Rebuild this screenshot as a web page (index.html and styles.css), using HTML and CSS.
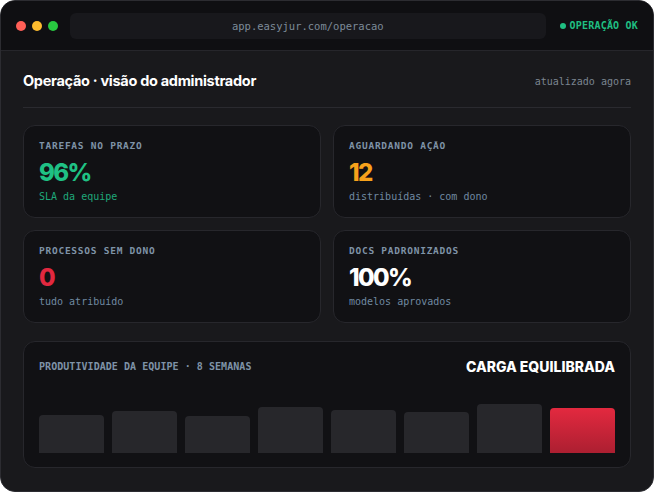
FILE: index.html
```html
<!DOCTYPE html>
<html lang="pt-BR">

<head>
  <meta charset="UTF-8">
  <meta name="viewport" content="width=device-width, initial-scale=1.0">
  <title>Operação · EasyJur</title>
  <link rel="stylesheet" href="styles.css">
</head>

<body>
  <div class="window">
    <div class="titlebar">
      <div class="dots">
        <span class="dot red"></span>
        <span class="dot yellow"></span>
        <span class="dot green"></span>
      </div>
      <div class="url">app.easyjur.com/operacao</div>
      <div class="status"><span class="status-dot"></span>OPERAÇÃO OK</div>
    </div>

    <div class="content">
      <div class="header">
        <h1>Operação · visão do administrador</h1>
        <span class="updated">atualizado agora</span>
      </div>

      <div class="cards">
        <div class="card">
          <div class="label">TAREFAS NO PRAZO</div>
          <div class="value green">96%</div>
          <div class="sub green-sub">SLA da equipe</div>
        </div>
        <div class="card">
          <div class="label">AGUARDANDO AÇÃO</div>
          <div class="value orange">12</div>
          <div class="sub">distribuídas · com dono</div>
        </div>
        <div class="card">
          <div class="label">PROCESSOS SEM DONO</div>
          <div class="value red">0</div>
          <div class="sub">tudo atribuído</div>
        </div>
        <div class="card">
          <div class="label">DOCS PADRONIZADOS</div>
          <div class="value white">100%</div>
          <div class="sub">modelos aprovados</div>
        </div>
      </div>

      <div class="chart">
        <div class="chart-head">
          <span class="chart-label">PRODUTIVIDADE DA EQUIPE · 8 SEMANAS</span>
          <span class="chart-tag">CARGA EQUILIBRADA</span>
        </div>
        <div class="bars">
          <div class="bar" style="height: 38px;"></div>
          <div class="bar" style="height: 42px;"></div>
          <div class="bar" style="height: 37px;"></div>
          <div class="bar" style="height: 46px;"></div>
          <div class="bar" style="height: 43px;"></div>
          <div class="bar" style="height: 41px;"></div>
          <div class="bar" style="height: 49px;"></div>
          <div class="bar current" style="height: 45px;"></div>
        </div>
      </div>
    </div>
  </div>
</body>

</html>
```

FILE: styles.css
```css
* {
  box-sizing: border-box;
}

body {
  margin: 0;
  background-color: #fff;
  font-family: "DejaVu Sans Mono", monospace;
}

.window {
  width: 654px;
  height: 492px;
  background-color: #19191c;
  border: 1px solid #2c2c31;
  border-radius: 15px;
  overflow: hidden;
}

/* title bar */
.titlebar {
  display: flex;
  align-items: center;
  height: 50px;
  padding: 0 15px;
  background-color: #0f0f12;
  border-bottom: 1px solid #26262b;
}

.dots {
  display: flex;
  gap: 6px;
}

.dot {
  width: 10px;
  height: 10px;
  border-radius: 50%;
}

.dot.red {
  background-color: #ff5f57;
}

.dot.yellow {
  background-color: #febc2e;
}

.dot.green {
  background-color: #28c840;
}

.url {
  flex: 1;
  height: 26px;
  margin-left: 12px;
  border-radius: 6px;
  background-color: #18181c;
  color: #7d8b99;
  font-size: 10.5px;
  line-height: 26px;
  text-align: center;
}

.status {
  display: flex;
  align-items: center;
  margin-left: 14px;
  color: #1fbf82;
  font-size: 10px;
  font-weight: bold;
  letter-spacing: 0.2px;
}

.status-dot {
  width: 6px;
  height: 6px;
  margin-right: 4px;
  border-radius: 50%;
  background-color: #1fbf82;
}

/* content */
.content {
  padding: 20px 22px 22px;
}

.header {
  display: flex;
  align-items: center;
  justify-content: space-between;
  padding-bottom: 16px;
  border-bottom: 1px solid #2a2a2f;
}

.header h1 {
  margin: 0;
  color: #fff;
  font-family: Inter, sans-serif;
  font-size: 14.5px;
  font-weight: 700;
  line-height: 20px;
  letter-spacing: -0.3px;
}

.updated {
  color: #7b8590;
  font-size: 10px;
}

.cards {
  display: grid;
  grid-template-columns: 1fr 1fr;
  gap: 12px;
  margin-top: 17px;
}

.card {
  padding: 14px 15px 13px;
  background-color: #111114;
  border: 1px solid #27272c;
  border-radius: 12px;
}

.label {
  color: #7f93a7;
  font-size: 9.5px;
  font-weight: bold;
  line-height: 12px;
  letter-spacing: 0.75px;
}

.value {
  margin-top: 7px;
  font-family: Inter, sans-serif;
  font-size: 24px;
  font-weight: 800;
  line-height: 28px;
  letter-spacing: -1.6px;
}

.value.green {
  color: #1fc184;
}

.value.orange {
  color: #f7a21b;
}

.value.red {
  color: #e2283f;
}

.value.white {
  color: #fff;
}

.sub {
  margin-top: 3px;
  color: #7089a1;
  font-size: 10px;
  line-height: 14px;
}

.sub.green-sub {
  color: #1fa87a;
}

/* weekly chart */
.chart {
  margin-top: 18px;
  padding: 16px 15px 14px;
  background-color: #111114;
  border: 1px solid #27272c;
  border-radius: 12px;
}

.chart-head {
  display: flex;
  align-items: center;
  justify-content: space-between;
  height: 17px;
}

.chart-label {
  color: #7f93a7;
  font-size: 10px;
  font-weight: bold;
  letter-spacing: 0.05px;
}

.chart-tag {
  color: #fff;
  font-family: Inter, sans-serif;
  font-size: 14px;
  font-weight: 800;
  letter-spacing: 0;
}

.bars {
  display: flex;
  align-items: flex-end;
  gap: 8px;
  height: 78px;
}

.bar {
  flex: 1;
  border-radius: 4px 4px 0 0;
  background-color: #27272b;
}

.bar.current {
  background-image: linear-gradient(#e3293f, #ac1f31);
}
```
